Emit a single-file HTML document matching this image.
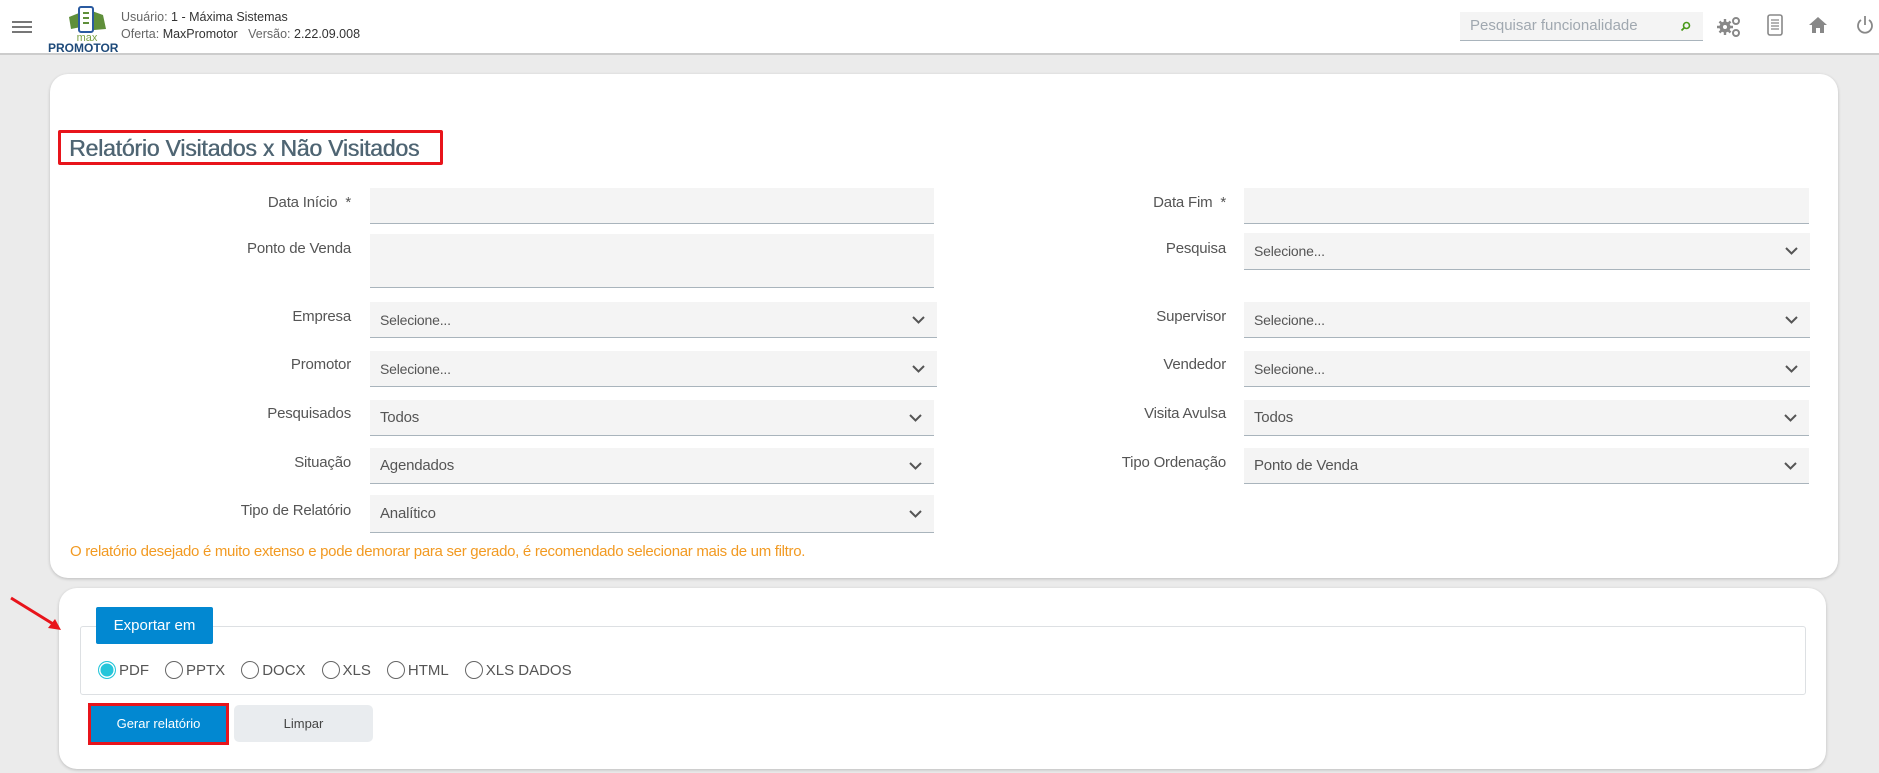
<!DOCTYPE html>
<html><head><meta charset="utf-8"><style>
*{box-sizing:border-box;margin:0;padding:0}
body{width:1879px;height:773px;background:#ebebeb;font-family:"Liberation Sans",sans-serif;position:relative;overflow:hidden;color:#555}
.hdr{position:absolute;left:0;top:0;width:1879px;height:55px;background:#fff;border-bottom:2px solid #ccc}
.abs{position:absolute}
.card{position:absolute;background:#fff;border-radius:18px;box-shadow:0 1px 3px rgba(0,0,0,.2)}
.lbl{position:absolute;font-size:15px;color:#555;text-align:right;width:300px;letter-spacing:-.2px}
.inp{position:absolute;background:#f4f4f4;border-bottom:1px solid #a9b4bc}
.sel{position:absolute;background:#f4f4f4;border-bottom:1px solid #a9b4bc;font-size:14px;color:#555;padding-left:10px;letter-spacing:-.2px}
.sel svg{position:absolute;right:12px;top:50%;margin-top:-4px}
.rad{display:inline-flex;align-items:center;margin-right:16px;font-size:15px;color:#555}
.rad i{width:18px;height:18px;border:1.5px solid #666;border-radius:50%;margin-right:3px;display:inline-block}
</style></head><body>
<div class="hdr">
 <div class="abs" style="left:12px;top:21px;width:20px;height:2px;background:#777;box-shadow:0 5px 0 #777,0 10px 0 #777"></div>
 <svg class="abs" style="left:66px;top:5px" width="42" height="30" viewBox="0 0 42 30"><path d="M3 12 L13 8 L15 22 L5 24 Z" fill="#5f8f3a"/><path d="M26 6 L37 10 L40 24 L28 25 Z" fill="#5f8f3a"/><rect x="13" y="2" width="14" height="25" rx="2" fill="#fff" stroke="#2a5aa0" stroke-width="2"/><path d="M17 8h6M17 13h6M17 18h6" stroke="#5f8f3a" stroke-width="2"/></svg>
 <div class="abs" style="left:70px;top:32px;font-size:11px;color:#7aa043;width:34px;text-align:center">max</div>
 <div class="abs" style="left:48px;top:41px;font-size:12px;font-weight:bold;color:#1e4a7a;letter-spacing:0">PROMOTOR</div>
 <div class="abs" style="left:121px;top:10px;font-size:12.5px;color:#666">Usuário: <span style="color:#333">1 - Máxima Sistemas</span></div>
 <div class="abs" style="left:121px;top:27px;font-size:12.5px;color:#666">Oferta: <span style="color:#333">MaxPromotor</span>&nbsp;&nbsp; Versão: <span style="color:#333">2.22.09.008</span></div>
 <div class="abs" style="left:1460px;top:12px;width:243px;height:29px;background:#f4f4f4;border-bottom:1px solid #a9b4bc;font-size:15px;color:#a0a8b0;padding:5px 10px">Pesquisar funcionalidade</div>
 <svg class="abs" style="left:1680px;top:21px" width="11" height="11" viewBox="0 0 11 11"><circle cx="6.5" cy="4.5" r="3" fill="none" stroke="#4a9a1a" stroke-width="1.6"/><path d="M4.5 6.5L1.5 9.5" stroke="#4a9a1a" stroke-width="1.8"/></svg>
 <svg class="abs" style="left:1717px;top:16px" width="24" height="22" viewBox="0 0 24 22"><circle cx="8" cy="11" r="5.5" fill="#888"/><g stroke="#888" stroke-width="2.4"><path d="M8 3v16M0 11h16M2.5 5.5l11 11M13.5 5.5l-11 11"/></g><circle cx="8" cy="11" r="2" fill="#fff"/><circle cx="19" cy="5" r="3" fill="none" stroke="#888" stroke-width="2"/><circle cx="19" cy="17" r="3" fill="none" stroke="#888" stroke-width="2"/></svg>
 <svg class="abs" style="left:1767px;top:14px" width="16" height="22" viewBox="0 0 16 22"><rect x="1" y="1" width="14" height="20" rx="2" fill="none" stroke="#888" stroke-width="1.6"/><path d="M4 6h8M4 9h8M4 12h8M4 15h8" stroke="#888" stroke-width="1.3"/></svg>
 <svg class="abs" style="left:1808px;top:16px" width="20" height="18" viewBox="0 0 20 18"><path d="M10 1L1 9h3v8h4v-5h4v5h4V9h3z" fill="#888"/></svg>
 <svg class="abs" style="left:1856px;top:15px" width="18" height="20" viewBox="0 0 18 20"><path d="M5 5A7 7 0 1 0 13 5" fill="none" stroke="#888" stroke-width="1.8"/><path d="M9 1v9" stroke="#888" stroke-width="1.8"/></svg>
</div>

<div class="card" style="left:50px;top:74px;width:1788px;height:504px"></div>
<div class="abs" style="left:58px;top:130px;width:385px;height:35px;border:3px solid #e8141b;border-radius:2px"></div>
<div class="abs" style="left:69px;top:135px;font-size:23px;color:#4f6573;letter-spacing:-.2px;text-shadow:0.5px 0 0 #4f6573">Relatório Visitados x Não Visitados</div>

<div class="lbl" style="left:51px;top:194px">Data Início &nbsp;*</div>
<div class="inp" style="left:370px;top:188px;width:564px;height:36px"></div>
<div class="lbl" style="left:926px;top:194px">Data Fim &nbsp;*</div>
<div class="inp" style="left:1244px;top:188px;width:565px;height:36px"></div>

<div class="lbl" style="left:51px;top:240px">Ponto de Venda</div>
<div class="inp" style="left:370px;top:234px;width:564px;height:54px"></div>
<div class="lbl" style="left:926px;top:240px">Pesquisa</div>
<div class="sel" style="left:1244px;top:233px;width:566px;height:37px;line-height:37px">Selecione...<svg width="13" height="8"><path d="M1 1l5.5 5.5L12 1" fill="none" stroke="#555" stroke-width="2"/></svg></div>

<div class="lbl" style="left:51px;top:308px">Empresa</div>
<div class="sel" style="left:370px;top:302px;width:567px;height:36px;line-height:36px">Selecione...<svg width="13" height="8"><path d="M1 1l5.5 5.5L12 1" fill="none" stroke="#555" stroke-width="2"/></svg></div>
<div class="lbl" style="left:926px;top:308px">Supervisor</div>
<div class="sel" style="left:1244px;top:302px;width:566px;height:36px;line-height:36px">Selecione...<svg width="13" height="8"><path d="M1 1l5.5 5.5L12 1" fill="none" stroke="#555" stroke-width="2"/></svg></div>

<div class="lbl" style="left:51px;top:356px">Promotor</div>
<div class="sel" style="left:370px;top:351px;width:567px;height:36px;line-height:36px">Selecione...<svg width="13" height="8"><path d="M1 1l5.5 5.5L12 1" fill="none" stroke="#555" stroke-width="2"/></svg></div>
<div class="lbl" style="left:926px;top:356px">Vendedor</div>
<div class="sel" style="left:1244px;top:351px;width:566px;height:36px;line-height:36px">Selecione...<svg width="13" height="8"><path d="M1 1l5.5 5.5L12 1" fill="none" stroke="#555" stroke-width="2"/></svg></div>

<div class="lbl" style="left:51px;top:405px">Pesquisados</div>
<div class="sel" style="left:370px;top:400px;width:564px;height:36px;line-height:36px;font-size:15px">Todos<svg width="13" height="8"><path d="M1 1l5.5 5.5L12 1" fill="none" stroke="#555" stroke-width="2"/></svg></div>
<div class="lbl" style="left:926px;top:405px">Visita Avulsa</div>
<div class="sel" style="left:1244px;top:400px;width:565px;height:36px;line-height:36px;font-size:15px">Todos<svg width="13" height="8"><path d="M1 1l5.5 5.5L12 1" fill="none" stroke="#555" stroke-width="2"/></svg></div>

<div class="lbl" style="left:51px;top:454px">Situação</div>
<div class="sel" style="left:370px;top:448px;width:564px;height:36px;line-height:36px;font-size:15px">Agendados<svg width="13" height="8"><path d="M1 1l5.5 5.5L12 1" fill="none" stroke="#555" stroke-width="2"/></svg></div>
<div class="lbl" style="left:926px;top:454px">Tipo Ordenação</div>
<div class="sel" style="left:1244px;top:448px;width:565px;height:36px;line-height:36px;font-size:15px">Ponto de Venda<svg width="13" height="8"><path d="M1 1l5.5 5.5L12 1" fill="none" stroke="#555" stroke-width="2"/></svg></div>

<div class="lbl" style="left:51px;top:502px">Tipo de Relatório</div>
<div class="sel" style="left:370px;top:495px;width:564px;height:38px;line-height:38px;font-size:15px">Analítico<svg width="13" height="8"><path d="M1 1l5.5 5.5L12 1" fill="none" stroke="#555" stroke-width="2"/></svg></div>

<div class="abs" style="left:70px;top:543px;font-size:15px;color:#f29a22;letter-spacing:-.3px">O relatório desejado é muito extenso e pode demorar para ser gerado, é recomendado selecionar mais de um filtro.</div>

<div class="card" style="left:59px;top:588px;width:1767px;height:181px"></div>
<svg class="abs" style="left:8px;top:595px" width="56" height="40"><path d="M3 3L50 32" stroke="#e8141b" stroke-width="3"/><path d="M53 35L40 33L47 24Z" fill="#e8141b"/></svg>
<div class="abs" style="left:80px;top:626px;width:1726px;height:69px;border:1px solid #dde0e3;border-radius:3px"></div>
<div class="abs" style="left:96px;top:607px;width:117px;height:37px;background:#0288d1;color:#fff;font-size:15px;line-height:37px;text-align:center;border-radius:2px">Exportar em</div>
<div class="abs" style="left:98px;top:661px;display:flex">
 <span class="rad"><i style="background:#26c6da;border-color:#26c6da;box-shadow:inset 0 0 0 1.5px #fff"></i>PDF</span>
 <span class="rad"><i></i>PPTX</span>
 <span class="rad"><i></i>DOCX</span>
 <span class="rad"><i></i>XLS</span>
 <span class="rad"><i></i>HTML</span>
 <span class="rad"><i></i>XLS DADOS</span>
</div>
<div class="abs" style="left:88px;top:703px;width:141px;height:42px;border:3px solid #e8141b"></div>
<div class="abs" style="left:91px;top:706px;width:135px;height:36px;background:#0288d1;color:#fff;font-size:13px;line-height:36px;text-align:center">Gerar relatório</div>
<div class="abs" style="left:234px;top:705px;width:139px;height:37px;background:#e9ecef;color:#444;font-size:13px;line-height:37px;text-align:center;border-radius:5px">Limpar</div>
</body></html>
